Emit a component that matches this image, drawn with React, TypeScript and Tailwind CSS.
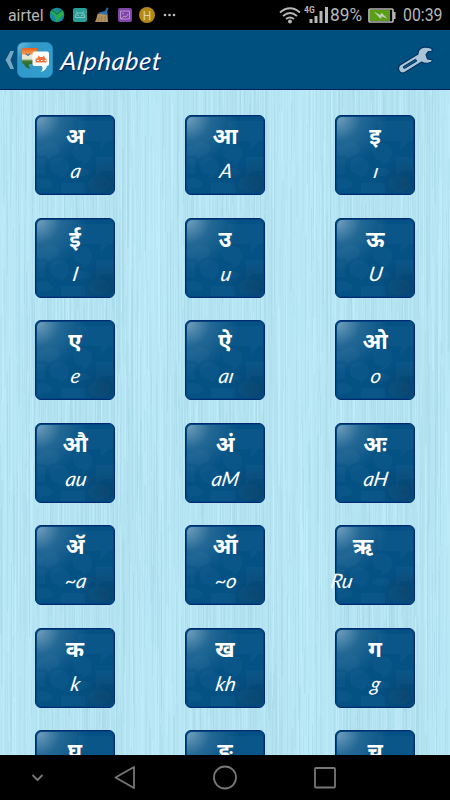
import type { ReactNode } from 'react';

type Letter = {
  native: string;
  latin: string;
  shifted?: boolean;
};

const letters: Letter[] = [
  { native: 'अ', latin: 'a' },
  { native: 'आ', latin: 'A' },
  { native: 'इ', latin: 'ı' },
  { native: 'ई', latin: 'I' },
  { native: 'उ', latin: 'u' },
  { native: 'ऊ', latin: 'U' },
  { native: 'ए', latin: 'e' },
  { native: 'ऐ', latin: 'aı' },
  { native: 'ओ', latin: 'o' },
  { native: 'औ', latin: 'au' },
  { native: 'अं', latin: 'aM' },
  { native: 'अः', latin: 'aH' },
  { native: 'ॲ', latin: '~a' },
  { native: 'ऑ', latin: '~o' },
  { native: 'ऋ', latin: 'Ru', shifted: true },
  { native: 'क', latin: 'k' },
  { native: 'ख', latin: 'kh' },
  { native: 'ग', latin: 'g' },
  { native: 'घ', latin: '' },
  { native: 'ङ', latin: '' },
  { native: 'च', latin: '' },
];

// Fixed seed so the grain is the same on every render
function makeGrain(count: number) {
  let seed = 90217;
  const next = () => {
    seed = (seed * 16807) % 2147483647;
    return seed / 2147483647;
  };
  return Array.from({ length: count }, (_, i) => ({
    x: i % 450,
    y: Math.round(next() * 760 - 120),
    w: next() > 0.85 ? 2 : 1,
    h: 60 + next() * 150,
    light: next() > 0.42,
    alpha: 0.12 + next() * 0.32,
  }));
}

const grain = makeGrain(2250);

function Backdrop() {
  return (
    <svg className="absolute inset-0" width="450" height="665" aria-hidden="true">
      <defs>
        <linearGradient id="columns" x1="0" x2="150" y1="0" y2="0" gradientUnits="userSpaceOnUse" spreadMethod="repeat">
          <stop offset="0" stopColor="#b8e7f5" />
          <stop offset=".35" stopColor="#b3e2f0" />
          <stop offset=".8" stopColor="#b2e1ef" />
          <stop offset="1" stopColor="#b8e7f5" />
        </linearGradient>
      </defs>
      <rect width="450" height="665" fill="url(#columns)" />
      {grain.map((g, i) => (
        <rect key={i} x={g.x} y={g.y} width={g.w} height={g.h} fill={g.light ? '#c6f2ff' : '#a2d5e5'} opacity={g.alpha} />
      ))}
    </svg>
  );
}

function TilePattern() {
  return (
    <svg className="absolute inset-0" width="78" height="78" viewBox="1 1 78 78" aria-hidden="true">
      <g fill="#1b6494" opacity=".28">
        <path d="M43 6h36v20H74l-9 9 1-9H43z" />
        <ellipse cx="16" cy="34" rx="9" ry="7" />
        <ellipse cx="6" cy="36" rx="6" ry="5" />
        <path d="M17 40l-3 4-5-4z" />
        <path d="M47 28a10 9 0 0 1 10 10c0 8-6 11-11 12l2-4a10 9 0 1 1-1-18z" />
        <path d="M24 42a10 9 0 0 1 10 10c0 6-5 9-9 11v-3a10 9 0 1 1-1-18zM1 44h9v15H1zM61 42h18v14H67l-6 6z" />
        <ellipse cx="46" cy="57" rx="9" ry="4" />
        <path d="M1 64q11-4 17 5-3 6-10 4l-4 3zM26 68h24v10H26z" />
        <ellipse cx="64" cy="69" rx="11" ry="8" />
      </g>
    </svg>
  );
}

function Tile({ native, latin, shifted }: Letter) {
  return (
    <div className="relative h-20 w-20 rounded-[6px] border border-[#002a70] bg-[#045184] text-white">
      <TilePattern />
      <div className="absolute inset-[1px] rounded-[5px] bg-[radial-gradient(ellipse_at_0%_0%,rgba(170,200,218,.68)_0%,rgba(110,160,190,.3)_22%,transparent_48%)]" />
      <div className="absolute inset-[1px] rounded-[5px] bg-[radial-gradient(circle_at_90%_88%,rgba(10,50,80,.4)_0%,transparent_28%)]" />
      <div className="absolute inset-0 rounded-[5px] border border-[#004480]/80" />
      <div className="relative flex flex-col items-center pt-[4px]">
        <span
          lang="hi"
          className={`h-[34px] whitespace-nowrap font-['Noto_Sans_Devanagari','Noto_Sans',sans-serif] text-[22px] leading-[38px] font-bold ${shifted ? '-translate-x-[12px]' : ''}`}
        >
          {native}
        </span>
        {latin && (
          <span
            className={`h-8 font-['Lato',sans-serif] text-[20px] leading-[33px] whitespace-nowrap italic ${shifted ? '-translate-x-[34px]' : ''}`}
          >
            <span className="inline-block translate-x-[1px] -skew-x-[10deg]">{latin}</span>
          </span>
        )}
      </div>
    </div>
  );
}

function StatusIcon({ children }: { children: ReactNode }) {
  return (
    <svg width="16" height="16" viewBox="0 0 16 16" fill="none">
      {children}
    </svg>
  );
}

function StatusBar() {
  return (
    <div className="flex h-[30px] items-center bg-black pr-[7px] pl-2 font-['Roboto',sans-serif] text-[#b7b7b7]">
      <span className="w-[41px] text-[17px] leading-[32px] whitespace-nowrap">
        <span className="inline-block origin-left scale-x-[.93]">airtel</span>
      </span>
      <div className="flex items-center gap-[6.5px]">
        <StatusIcon>
          <circle cx="8" cy="8" r="7.3" fill="#168b9f" />
          <path d="m1 5 3-3 4 3 5-2 2 4-5 5-3 3-1-6z" fill="#27ae48" />
          <path d="m3 3 5 4 5-4" stroke="#126778" strokeWidth="1.2" />
        </StatusIcon>
        <StatusIcon>
          <rect x="1" y="1" width="14" height="14" rx="2" fill="#299d98" />
          <path d="M3.5 10.5V9q0-3 3-3h3q3 0 3 3v1.5zM5.5 6l-1-1.5m6 1.5 1-1.5" stroke="#8bc5be" />
          <path d="M6 8v1m4-1v1" stroke="#b3d6cf" />
        </StatusIcon>
        <StatusIcon>
          <path d="M3.5 7q-1 5-2.500 8h13l-.5-8-3-2z" fill="#b0905a" />
          <path d="m3 6 8-2 2-3.500 1.500.5L13 5l1 3z" fill="#2471ae" />
          <path d="m5 10-1 4m4-5-1 5m4-5v5" stroke="#947443" strokeWidth=".7" />
        </StatusIcon>
        <StatusIcon>
          <rect x="1" y="1" width="14" height="14" rx="2" fill="#7d45a8" />
          <path d="M3.5 4h9v8h-9zM4 12l3-3 2 1 2-3M5 6l2 1" stroke="#c49bd1" strokeWidth=".9" />
        </StatusIcon>
        <svg width="16" height="16" viewBox="0 0 16 16">
          <circle cx="8" cy="8" r="8" fill="#b28817" />
          <text x="8" y="12.5" textAnchor="middle" fontSize="12" fontFamily="Roboto, sans-serif" fill="#ddd3ae">H</text>
        </svg>
        <svg className="ml-[1px]" width="14" height="4" fill="#bcbcbc">
          <circle cx="2" cy="2" r="1.3" />
          <circle cx="6.5" cy="2" r="1.3" />
          <circle cx="11" cy="2" r="1.3" />
        </svg>
      </div>

      <div className="ml-auto flex items-center">
        <svg width="22" height="18" viewBox="0 0 22 18" fill="none" stroke="#b7b7b7" strokeWidth="1.8">
          <path d="M1 6.500q10-8.500 20 0M4 10q7-6 14 0M7 13q4-3 8 0" />
          <circle cx="11" cy="15.5" r="2" fill="#b7b7b7" stroke="none" />
        </svg>
        <svg className="ml-[3px]" width="26" height="20" fill="#b7b7b7">
          <text x="0" y="7.5" fontSize="8.5" fontWeight="700" fontFamily="Roboto, sans-serif">4G</text>
          <path d="M5.500 14h3v4h-3zM10.500 11h3v7h-3zM15.500 6h3v12h-3zM21 2h3v16h-3z" />
        </svg>
        <span className="w-[38px] text-[18px] leading-[32px] whitespace-nowrap">
          <span className="inline-block origin-left scale-x-[.96]">89%</span>
        </span>
        <svg width="28" height="15" viewBox="0 0 28 15">
          <path d="M25 4h2.5v7H25" fill="#b7b7b7" />
          <rect x="1" y="1" width="24" height="13" rx="1" fill="#000" stroke="#b7b7b7" strokeWidth="1.7" />
          <path d="M2 2h20v11H2z" fill="#599e16" />
          <path d="m7 4.5 5.500 3 1-2.500 5 5-5-2-1 2.500z" fill="#c9cec3" stroke="#c9cec3" strokeWidth=".6" />
        </svg>
        <span className="ml-[7px] w-10 text-[18px] leading-[32px] whitespace-nowrap">
          <span className="inline-block origin-left scale-x-[.88]">00:39</span>
        </span>
      </div>
    </div>
  );
}

function AppLogo() {
  return (
    <svg width="36" height="36" viewBox="0 0 36 36">
      <defs>
        <linearGradient id="logo" x1="0" y1="0" x2="1" y2="1">
          <stop stopColor="#76c2dc" />
          <stop offset=".25" stopColor="#3199ca" />
          <stop offset="1" stopColor="#329dcc" />
        </linearGradient>
        <linearGradient id="flag" x1="0" y1="0" x2="0" y2="1">
          <stop offset="0" stopColor="#e8611c" />
          <stop offset=".27" stopColor="#f39a4f" />
          <stop offset=".36" stopColor="#f1e8d4" />
          <stop offset=".52" stopColor="#dfe5d3" />
          <stop offset=".62" stopColor="#3b7a34" />
          <stop offset="1" stopColor="#1d5f2c" />
        </linearGradient>
      </defs>
      <rect x=".5" y=".5" width="35" height="35" rx="6" fill="url(#logo)" stroke="#2687bb" />
      <path d="M6.5 6H20v16h-8q-1 3 2 5-6-1-7-5-2 0-2-2V7.500Q5 6 6.500 6z" fill="url(#flag)" />
      <path d="m8.5 11.5 2.500 2 2-2" fill="none" stroke="#4d75a8" strokeWidth="1.2" />
      <path d="M17.5 9.5H30q2 0 2 2V22q0 2-2 2-1 4.500-6 6 2.500-3 1-6h-7.500q-2 0-2-2V11.500q0-2 2-2z" fill="#fff" />
      <path d="M18.5 20.5v-4h2l1-3 1.500 1.500h2.500l1.500-1.500 1 3h1.500v4z" fill="#f0733b" />
      <path d="M20 18.5h2m2 0h1.500m2 0H29" stroke="#fff" />
    </svg>
  );
}

function WrenchIcon() {
  return (
    <svg className="mr-[16px] ml-auto" width="38" height="28" viewBox="0 0 38 28" strokeLinejoin="round">
      <path
        d="M22 8Q22 4 25.5 2T36 2.500V5.300L32.300 5.500 30 8.500 31.500 13 36.300 13.700 35.700 16Q30 18.500 25.700 16L9.500 26Q6 28 4 26 1 22 4 19Z"
        fill="#a9c5d7"
        stroke="#00305f"
        strokeWidth="1.1"
      />
      <path d="M7.5 20.5 19.500 13.200 20.800 15 8.800 22.300Q6.500 22.500 7.500 20.500Z" fill="#0d5783" stroke="#00305f" />
    </svg>
  );
}

function Header() {
  return (
    <header className="relative flex h-[60px] items-center border-b border-[#00205f] bg-[#00507f] pl-[5px]">
      <svg width="9" height="20" viewBox="0 0 9 20">
        <path d="M5.5 1H9L5.500 10 9 19H5.500L.5 10z" fill="#77a6c0" />
      </svg>
      <div className="ml-[3px]">
        <AppLogo />
      </div>
      <h1 className="ml-[8px] font-['Lato',sans-serif] text-[25px] leading-[58px] tracking-[.8px] text-white italic [text-shadow:1px_1px_1px_#00206a]">
        <span className="inline-block -skew-x-[6deg]">Alphabet</span>
      </h1>
      <WrenchIcon />
    </header>
  );
}

function NavigationBar() {
  return (
    <nav className="flex h-[45px] items-center bg-black text-[#777]">
      <svg width="450" height="45" fill="none" stroke="currentColor" strokeWidth="1.8" strokeLinejoin="round">
        <path d="m32.5 20 5 5 5-5M134 12v21l-18.500-10.500z" />
        <circle cx="225" cy="22.5" r="11" />
        <rect x="315" y="13" width="20" height="19.5" rx="1" />
      </svg>
    </nav>
  );
}

export default function App() {
  return (
    <div className="flex h-[800px] w-[450px] flex-col overflow-hidden bg-black">
      <StatusBar />
      <Header />
      <main className="relative h-[665px] overflow-hidden bg-[#b5e5f4]">
        <Backdrop />
        <div className="relative grid grid-cols-3 justify-items-center gap-y-[22.5px] pt-[25px]">
          {letters.map((letter) => (
            <Tile key={letter.native} {...letter} />
          ))}
        </div>
      </main>
      <NavigationBar />
    </div>
  );
}
